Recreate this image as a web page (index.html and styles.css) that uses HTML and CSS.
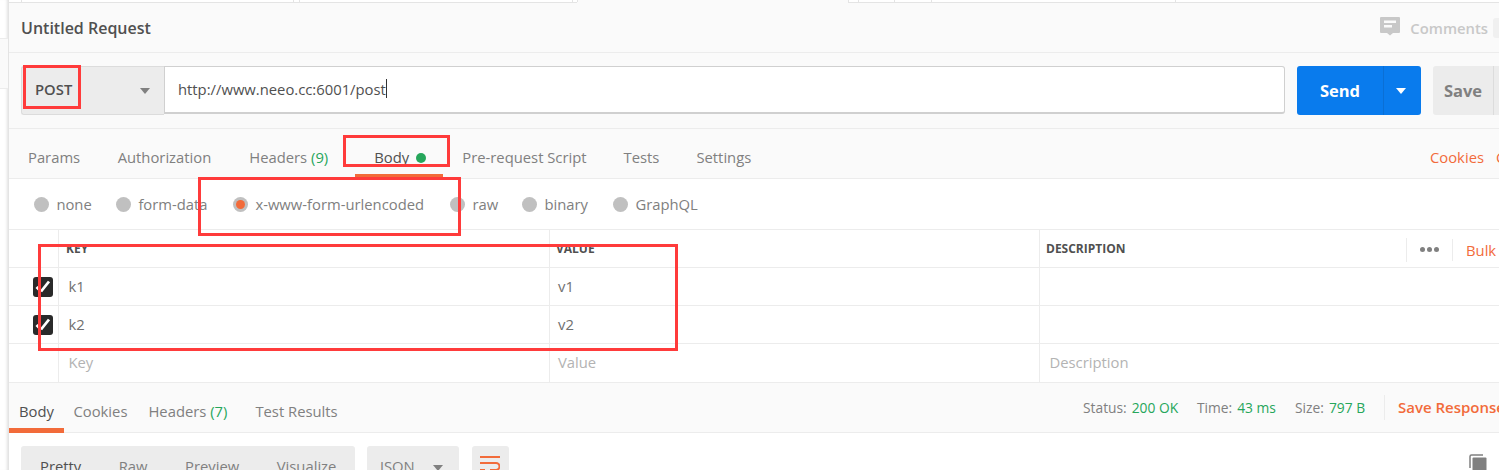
FILE: index.html
```html
<!DOCTYPE html>
<html lang="en">
<head>
<meta charset="utf-8">
<title>Untitled Request</title>
<link rel="stylesheet" href="styles.css">
</head>
<body>
<div class="app">
  <aside class="side"><div class="side-a"></div><div class="side-b"></div></aside>
  <main class="main">
    <div class="topstrip">
      <div class="seg seg-a"><span class="cell w12"></span><span class="cell w272"></span><span class="cell w6"></span><span class="cell w273"></span><span class="cell w5"></span></div>
      <div class="seg seg-b"><span class="cell w10"></span><span class="cell w36"></span><span class="cell w37"></span><span class="cell w244"></span></div>
    </div>
    <header class="title-bar">
      <h1 class="title">Untitled Request</h1>
      <div class="comments">
        <svg class="cicon" width="20" height="19" viewBox="0 0 20 19"><path d="M1 0h18a1 1 0 0 1 1 1v14a1 1 0 0 1-1 1h-6l-3 2.500L7 16H1a1 1 0 0 1-1-1V1a1 1 0 0 1 1-1z" fill="#c8c8c8"/><rect x="4" y="3.500" width="12" height="2.500" fill="#fafafa"/><rect x="4" y="8" width="8" height="2.500" fill="#fafafa"/></svg>
        <span>Comments</span><span class="cbadge"></span>
      </div>
    </header>
    <section class="url-bar">
      <div class="method"><span>POST</span><i class="caret"></i></div>
      <div class="url"><span>http://www.neeo.cc:6001/post</span><i class="cursor"></i></div>
      <div class="send"><span class="send-l">Send</span><span class="send-r"><i class="caret caret-w"></i></span></div>
      <div class="save"><span class="save-l">Save</span></div>
    </section>
    <nav class="tabs">
      <span class="tab tab-params">Params</span>
      <span class="tab tab-auth">Authorization</span>
      <span class="tab tab-head">Headers <em>(9)</em></span>
      <span class="tab tab-body">Body<i class="gdot"></i></span>
      <span class="tab tab-pre">Pre-request Script</span>
      <span class="tab tab-tests">Tests</span>
      <span class="tab">Settings</span>
      <span class="tab-links"><span>Cookies</span><span>Code</span></span>
    </nav>
    <div class="types">
      <label class="type t1"><i class="radio"></i>none</label>
      <label class="type t2"><i class="radio"></i>form-data</label>
      <label class="type t3"><i class="radio on"></i>x-www-form-urlencoded</label>
      <label class="type t4"><i class="radio"></i>raw</label>
      <label class="type t5"><i class="radio"></i>binary</label>
      <label class="type"><i class="radio"></i>GraphQL</label>
    </div>
    <div class="table">
      <div class="row head">
        <div class="c0"></div><div class="c1">KEY</div><div class="c2">VALUE</div>
        <div class="c3 head-d"><span>DESCRIPTION</span>
          <span class="tools"><span class="dots"><i></i><i></i><i></i></span><span class="bulk">Bulk Edit</span></span>
        </div>
      </div>
      <div class="row">
        <div class="c0"><span class="check"><svg width="20" height="20" viewBox="0 0 20 20"><path d="M3.500 10l2.500 2.500M8 14.500L16 4.500" fill="none" stroke="#fff" stroke-width="2.800"/></svg></span></div>
        <div class="c1">k1</div><div class="c2">v1</div><div class="c3"></div>
      </div>
      <div class="row">
        <div class="c0"><span class="check"><svg width="20" height="20" viewBox="0 0 20 20"><path d="M3.500 10l2.500 2.500M8 14.500L16 4.500" fill="none" stroke="#fff" stroke-width="2.800"/></svg></span></div>
        <div class="c1">k2</div><div class="c2">v2</div><div class="c3"></div>
      </div>
      <div class="row ph">
        <div class="c0"></div><div class="c1">Key</div><div class="c2">Value</div><div class="c3">Description</div>
      </div>
    </div>
    <div class="resp-bar">
      <span class="rtab rtab-body active">Body</span>
      <span class="rtab rtab-cookies">Cookies</span>
      <span class="rtab rtab-head">Headers <em>(7)</em></span>
      <span class="rtab">Test Results</span>
      <div class="stats">
        <span class="stat s1">Status:<b>200 OK</b></span>
        <span class="stat s2">Time:<b>43 ms</b></span>
        <span class="stat s3">Size:<b>797 B</b></span>
        <span class="save-resp">Save Response</span>
      </div>
    </div>
    <div class="view">
      <div class="modes"><span>Pretty</span><span>Raw</span><span>Preview</span><span>Visualize</span></div>
      <div class="fmt"><span>JSON</span><i class="caret"></i></div>
      <div class="wrap"><svg width="20" height="20" viewBox="0 0 20 20"><path d="M0 2h20M0 8h16a3.500 3.500 0 0 1 0 7h-6M0 15h5" fill="none" stroke="#f26b3a" stroke-width="2"/></svg></div>
      <svg class="copy" width="18" height="18" viewBox="0 0 18 18"><path d="M1 14V2.500A1.500 1.500 0 0 1 2.500 1H14" fill="none" stroke="#808080" stroke-width="1.500"/><rect x="3.500" y="3.500" width="14" height="14" rx="1" fill="#808080"/></svg>
    </div>
  </main>
</div>
<div class="mark m-post"></div>
<div class="mark m-body"></div>
<div class="mark m-type"></div>
<div class="mark m-table"></div>
</body>
</html>
```

FILE: styles.css
```css
* { box-sizing: border-box; }
html, body { margin: 0; height: 470px; overflow: hidden; background: #fff; }
body {
  position: relative;
  font-family: "Open Sans", "Liberation Sans", sans-serif;
  font-size: 14.800px;
  color: #808080;
}
em { font-style: normal; color: #26a65b; }
.app { display: flex; width: 1499px; height: 470px; overflow: hidden; }

.side { width: 9px; flex: none; border-right: 1px solid #e4e4e4; box-shadow: inset -3px 0 3px -2px #e0e0e0; }
.side-a { height: 39px; border-bottom: 1px solid #ececec; }
.side-b { height: 50px; background: #fafafa; border-bottom: 1px solid #ececec; }

.main { flex: 1; min-width: 0; display: flex; flex-direction: column; }

.topstrip { height: 3px; flex: none; display: flex; background: #fafafa; }
.seg { display: flex; height: 3px; border-bottom: 1px solid #e4e4e4; background: #fff; flex: none; }
.seg-a { width: 568px; }
.seg-b { width: 651px; margin-left: 271px; border-left: 1px solid #e4e4e4; }
.cell { height: 2px; border-right: 1px solid #e4e4e4; flex: none; }
.w5 { width: 5px; }
.w6 { width: 6px; }
.w10 { width: 10px; }
.w12 { width: 13px; }
.w36 { width: 36px; }
.w37 { width: 37px; }
.w244 { width: 244px; }
.w272 { width: 272px; }
.w273 { width: 273px; }

.title-bar {
  height: 50px; flex: none; background: #fafafa; border-bottom: 1px solid #ececec;
  display: flex; align-items: center; justify-content: space-between; padding-left: 12px;
}
.title { margin: 0; font-size: 16px; font-weight: 600; color: #505050; line-height: 22px; }
.comments { display: flex; align-items: center; color: #c8c8c8; font-weight: 600; font-size: 14.800px; }
.cicon { margin-right: 10px; margin-top: -3px; }
.cbadge { width: 6px; height: 20px; margin-left: 5px; background: #f0f0f0; border-radius: 3px 0 0 3px; }

.url-bar {
  height: 76px; flex: none; background: #fafafa; border-bottom: 1px solid #ececec;
  display: flex; align-items: flex-start; padding: 13px 0 0 12px;
}
.method {
  width: 143px; height: 49px; flex: none; background: #ececec; border: 1px solid #dcdcdc; border-right: 0;
  border-radius: 3px 0 0 3px; display: flex; align-items: center; justify-content: space-between;
  padding: 0 14px 3px 13px; color: #505050; font-weight: 600; font-size: 14.800px;
}
.method .caret { margin-top: 3px; }
.caret { display: block; width: 0; height: 0; border-left: 5px solid transparent; border-right: 5px solid transparent; border-top: 6px solid #808080; }
.caret-w { border-top-color: #fff; }
.url {
  width: 1121px; height: 48px; flex: none; background: #fff; border: 1px solid #d0d0d0; border-width: 1px 1px 2px;
  border-radius: 0 3px 3px 0; display: flex; align-items: center; padding: 0 0 2px 13px; color: #505050; font-size: 14.800px;
}
.cursor { width: 1px; height: 19px; background: #333; }
.send {
  width: 124px; height: 49px; flex: none; margin-left: 12px; background: #097bed; border-radius: 3px;
  display: flex; color: #fff; font-weight: 700; font-size: 16.500px;
}
.send-l { width: 86px; display: flex; align-items: center; justify-content: center; }
.send-r { flex: 1; border-left: 1px solid #0a6fd5; display: flex; align-items: center; justify-content: center; padding-right: 3px; }
.save {
  width: 66px; height: 49px; flex: none; margin-left: 12px; background: #ececec; border-radius: 3px 0 0 3px;
  display: flex; color: #808080; font-weight: 700; font-size: 16.500px;
}
.save-l { width: 61px; border-right: 1px solid #dcdcdc; display: flex; align-items: center; justify-content: center; }

.tabs {
  height: 50px; flex: none; background: #fafafa; border-bottom: 1px solid #ececec;
  display: flex; align-items: center; padding: 7px 0 0 19px; position: relative; white-space: nowrap;
}
.tab { font-size: 14.800px; color: #808080; line-height: 20px; flex: none; }
.tab-params { margin-right: 37.500px; }
.tab-auth { margin-right: 38px; }
.tab-head { width: 125px; }
.tab-body { width: 88px; color: #505050; display: flex; align-items: center; }
.tab-pre { margin-right: 37px; }
.tab-tests { margin-right: 37px; }
.gdot { width: 10px; height: 10px; border-radius: 50%; background: #26a65b; margin-left: 6.500px; margin-top: 1px; }
.tab-links { margin-left: auto; display: flex; gap: 12px; color: #f26b3a; font-size: 14.800px; line-height: 20px; width: 69px; overflow: hidden; flex: none; }
.tab-body::after {
  content: ""; position: absolute; left: 346px; top: 45px; width: 88px; height: 4px; background: #f26b3a;
}

.types { height: 51px; flex: none; border-bottom: 1px solid #ececec; display: flex; align-items: center; padding-left: 25px; }
.type { display: flex; align-items: center; font-size: 14.800px; color: #808080; flex: none; }
.radio { width: 15px; height: 15px; border-radius: 50%; background: #c0c0c0; margin-right: 7.400px; position: relative; flex: none; }
.radio.on::after { content: ""; position: absolute; left: 3px; top: 3px; width: 9px; height: 9px; border-radius: 50%; background: #f26b3a; }
.t1 { width: 82px; }
.t2 { width: 117px; }
.t3 { width: 217px; }
.t4 { width: 72px; }
.t5 { width: 91px; }

.table { flex: none; }
.row { display: grid; grid-template-columns: 49px 491px 490px 1fr; height: 38px; border-bottom: 1px solid #ececec; }
.row.ph { height: 39px; }
.row > div { display: flex; align-items: center; padding: 0 0 2px 9.500px; font-size: 14.800px; color: #707070; min-width: 0; }
.row > .c2 { padding-left: 8px; }
.row > div + div { border-left: 1px solid #ececec; }
.row.head > div { font-size: 12px; font-weight: 700; color: #505050; padding: 0 0 1px 6px; }
.row.head > .c1 { padding-left: 7px; }
.head-d { justify-content: space-between; white-space: nowrap; overflow: hidden; }
.tools { display: flex; align-items: center; flex: none; width: 93px; height: 24px; border-left: 1px solid #ececec; padding-left: 13px; margin-top: 3px; }
.dots { display: flex; gap: 2px; width: 33px; height: 22px; align-items: center; border-right: 1px solid #ececec; margin-right: 13px; flex: none; }
.dots i { width: 5px; height: 5px; border-radius: 50%; background: #808080; }
.bulk { font-size: 14.800px; font-weight: 400; color: #f26b3a; }
.row > .c0 { justify-content: flex-start; padding: 0 0 0 24px; }
.check { width: 20px; height: 20px; border-radius: 3px; background: #2a2a2a; display: block; flex: none; }
.check svg { display: block; }
.row.ph > div { color: #b3b3b3; }

.resp-bar {
  height: 50px; flex: none; background: #fafafa; border-bottom: 1px solid #ececec;
  display: flex; align-items: center; padding: 6px 0 0 10px; white-space: nowrap; position: relative;
}
.rtab { font-size: 14.800px; line-height: 20px; color: #808080; flex: none; }
.rtab-body { margin-right: 19.500px; }
.rtab-cookies { margin-right: 21px; }
.rtab-head { margin-right: 28px; }
.rtab.active { color: #505050; }
.rtab.active::after { content: ""; position: absolute; left: 0; bottom: -1px; width: 55px; height: 5px; background: #f26b3a; }
.stats { position: absolute; left: 1074px; top: 12px; display: flex; align-items: center; font-size: 13.800px; line-height: 25px; color: #808080; width: 416px; overflow: hidden; }
.stat { flex: none; }
.stat b { font-weight: 400; color: #26a65b; margin-left: 5px; }
.s1 { width: 114px; }
.s2 { width: 98px; }
.s3 { width: 89px; }
.save-resp { border-left: 1px solid #ececec; padding-left: 13px; height: 25px; color: #f26b3a; font-weight: 600; font-size: 15px; flex: none; }

.view { flex: 1; display: flex; align-items: flex-start; padding: 13px 0 0 12px; position: relative; overflow: hidden; }
.modes { width: 334px; height: 40px; flex: none; background: #ececec; border-radius: 3px; display: flex; align-items: center; padding: 0 0 0 19px; font-size: 14.800px; color: #808080; }
.modes span { margin-right: 37.500px; flex: none; }
.modes span:first-child { color: #505050; }
.fmt { width: 92px; height: 40px; flex: none; margin-left: 12px; background: #ececec; border-radius: 3px; display: flex; align-items: center; padding: 0 0 0 13px; color: #808080; font-size: 14.800px; }
.fmt .caret { margin-left: 18px; margin-top: 4px; }
.wrap { width: 37px; height: 40px; flex: none; margin-left: 13px; background: #ececec; border-radius: 3px; padding: 9px 0 0 8px; }
.copy { position: absolute; left: 1460px; top: 21px; }

.mark { position: absolute; border: 3px solid #ff3b3b; pointer-events: none; }
.m-post { left: 23px; top: 65px; width: 58px; height: 44px; }
.m-body { left: 343px; top: 135px; width: 107px; height: 32px; }
.m-type { left: 198px; top: 177px; width: 263px; height: 59px; }
.m-table { left: 38px; top: 244px; width: 640px; height: 107px; }
```
